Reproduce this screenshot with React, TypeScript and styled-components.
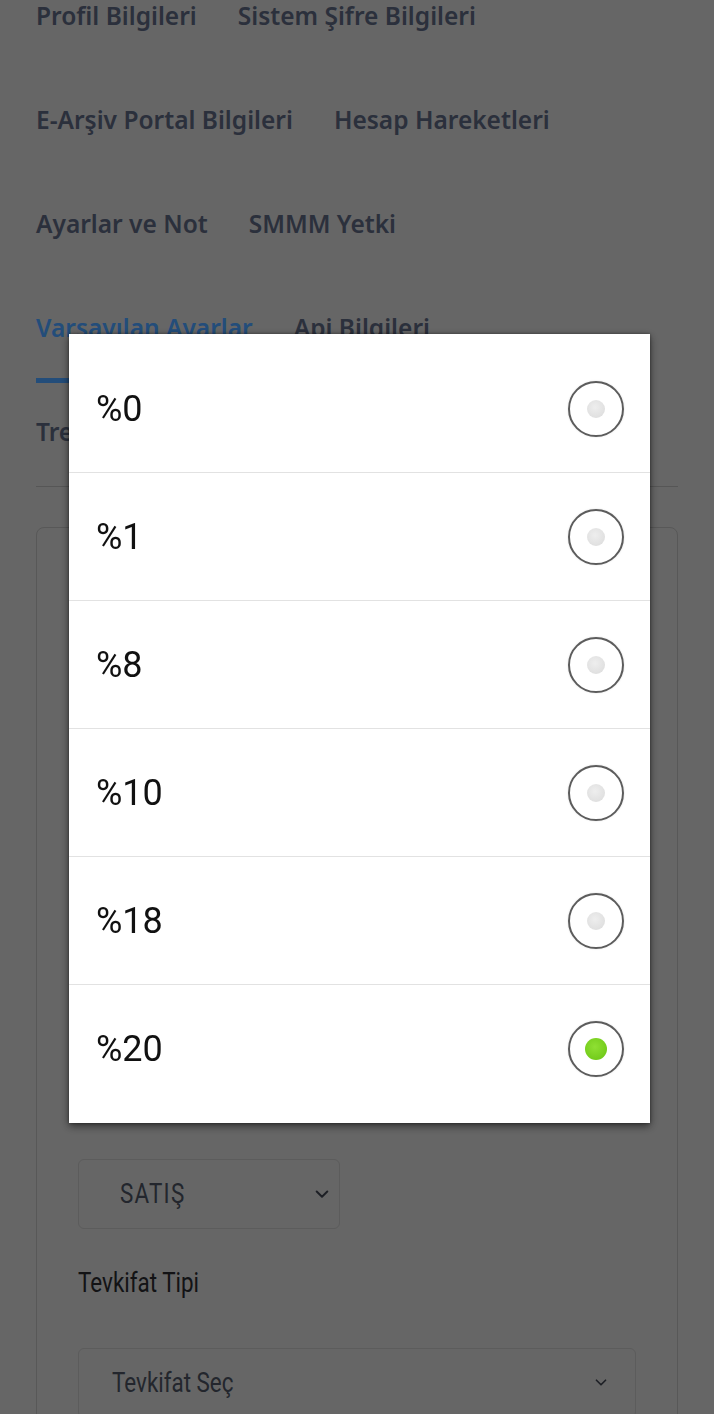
import styled, { createGlobalStyle } from "styled-components";

const GlobalStyle = createGlobalStyle`
  html, body {
    margin: 0;
    padding: 0;
    background: #cccccc;
  }
  body {
    font-family: "Noto Sans", sans-serif;
  }
  * {
    box-sizing: border-box;
  }
`;

const Page = styled.div`
  width: 714px;
  height: 1414px;
  overflow: hidden;
  padding: 0 36px;
  background: #cccccc;
`;

const TabList = styled.div`
  display: flex;
  flex-direction: column;
  gap: 33px;
`;

const TabRow = styled.div`
  display: flex;
  gap: 41px;
`;

const Tab = styled.div<{ $active?: boolean }>`
  font-family: "Noto Sans", sans-serif;
  font-size: 24.5px;
  font-weight: 600;
  line-height: 32px;
  padding-bottom: 34px;
  border-bottom: 5px solid ${({ $active }) => ($active ? "#469af4" : "transparent")};
  color: ${({ $active }) => ($active ? "#469af4" : "#566078")};
  white-space: nowrap;
`;

const SubTitle = styled.div`
  margin-top: 33px;
  font-family: "Noto Sans", sans-serif;
  font-size: 24.5px;
  font-weight: 600;
  line-height: 32px;
  color: #566078;
`;

const Divider = styled.hr`
  margin: 38px 0 0;
  border: 0;
  border-top: 1px solid #acacac;
`;

const Card = styled.div`
  margin-top: 40px;
  border: 1px solid #b0b0b0;
  border-radius: 8px;
  padding: 41px 41px 60px;
`;

// Roboto squeezed to read like the condensed face of the form
const Narrow = styled.span<{ $wide?: boolean }>`
  display: inline-block;
  font-family: "Roboto", sans-serif;
  transform: scaleX(0.83);
  transform-origin: left center;
  white-space: nowrap;
  letter-spacing: ${({ $wide }) => ($wide ? "1.5px" : "0")};
`;

const CardTitle = styled.div`
  font-size: 27px;
  line-height: 36px;
  color: #3c3c40;
  margin-bottom: 91px;
`;

const Field = styled.div`
  display: flex;
  flex-direction: column;
  align-items: flex-start;
  padding-bottom: 35px;
`;

const Label = styled.div`
  font-size: 27px;
  line-height: 36px;
  color: #26272b;
  margin-bottom: 47px;
`;

const Select = styled.div<{ $wide?: boolean }>`
  display: flex;
  align-items: center;
  justify-content: space-between;
  width: ${({ $wide }) => ($wide ? 558 : 262)}px;
  height: 70px;
  padding: ${({ $wide }) => ($wide ? "0 28px 0 33px" : "0 10px 0 41px")};
  border: 1px solid #b8b8b8;
  border-radius: 6px;
  font-size: 27px;
  color: #464c5a;
`;

const Chevron = ({ size }: { size: number }) => (
  <svg width={size} height={size * 0.62} viewBox="0 0 14 9" fill="none">
    <polyline
      points="1.5,1.5 7,7 12.5,1.5"
      stroke="#3a3f4a"
      strokeWidth="2"
      strokeLinecap="round"
      strokeLinejoin="round"
    />
  </svg>
);

const Overlay = styled.div`
  position: fixed;
  inset: 0;
  background: rgba(0, 0, 0, 0.5);
  padding: 334px 0 0 69px;
`;

const Dialog = styled.div`
  width: 581px;
  background: #ffffff;
  padding: 11px 0 10px;
  box-shadow: 0 3px 8px rgba(0, 0, 0, 0.55), 0 0 3px rgba(0, 0, 0, 0.4);
`;

const Option = styled.div<{ $last?: boolean }>`
  display: flex;
  align-items: center;
  justify-content: space-between;
  height: 128px;
  padding: 0 26px 0 27px;
  border-bottom: ${({ $last }) => ($last ? "none" : "1px solid #e2e2e2")};
  font-family: "Roboto", sans-serif;
  font-size: 36px;
  color: #111111;
`;

const Radio = styled.span<{ $checked?: boolean }>`
  display: flex;
  align-items: center;
  justify-content: center;
  width: 56px;
  height: 56px;
  border-radius: 50%;
  border: 2px solid #5c5c5c;
  box-shadow: 0 0 2px rgba(0, 0, 0, 0.15);

  &::after {
    content: "";
    width: ${({ $checked }) => ($checked ? 22 : 18)}px;
    height: ${({ $checked }) => ($checked ? 22 : 18)}px;
    border-radius: 50%;
    background: ${({ $checked }) =>
      $checked
        ? "radial-gradient(circle at 45% 40%, #8fe033 0%, #74cc1c 70%, #62b214 100%)"
        : "radial-gradient(circle at 45% 40%, #eeeeee 0%, #e0e0e0 70%, #d0d0d0 100%)"};
  }
`;

const options = ["%0", "%1", "%8", "%10", "%18", "%20"];

export default function App() {
  return (
    <>
      <GlobalStyle />
      <Page>
        <TabList>
          <TabRow>
            <Tab>Profil Bilgileri</Tab>
            <Tab>Sistem Şifre Bilgileri</Tab>
          </TabRow>
          <TabRow>
            <Tab>E-Arşiv Portal Bilgileri</Tab>
            <Tab>Hesap Hareketleri</Tab>
          </TabRow>
          <TabRow>
            <Tab>Ayarlar ve Not</Tab>
            <Tab>SMMM Yetki</Tab>
          </TabRow>
          <TabRow>
            <Tab $active>Varsayılan Ayarlar</Tab>
            <Tab>Api Bilgileri</Tab>
          </TabRow>
        </TabList>
        <SubTitle>Trendyol Ayarları</SubTitle>
        <Divider />
        <Card>
          <CardTitle>
            <Narrow>Varsayılan Fatura Ayarları</Narrow>
          </CardTitle>
          <Field>
            <Label>
              <Narrow>Fatura Senaryosu</Narrow>
            </Label>
            <Select $wide>
              <Narrow>E-Arşiv Fatura</Narrow>
              <Chevron size={12} />
            </Select>
          </Field>
          <Field>
            <Label>
              <Narrow>KDV Oranı</Narrow>
            </Label>
            <Select>
              <Narrow>%20</Narrow>
              <Chevron size={14} />
            </Select>
          </Field>
          <Field>
            <Label>
              <Narrow>Fatura Tipi</Narrow>
            </Label>
            <Select>
              <Narrow $wide>SATIŞ</Narrow>
              <Chevron size={14} />
            </Select>
          </Field>
          <Field>
            <Label>
              <Narrow>Tevkifat Tipi</Narrow>
            </Label>
            <Select $wide>
              <Narrow>Tevkifat Seç</Narrow>
              <Chevron size={12} />
            </Select>
          </Field>
        </Card>
      </Page>
      <Overlay>
        <Dialog>
          {options.map((o, i) => (
            <Option key={o} $last={i === options.length - 1}>
              {o}
              <Radio $checked={o === "%20"} />
            </Option>
          ))}
        </Dialog>
      </Overlay>
    </>
  );
}
